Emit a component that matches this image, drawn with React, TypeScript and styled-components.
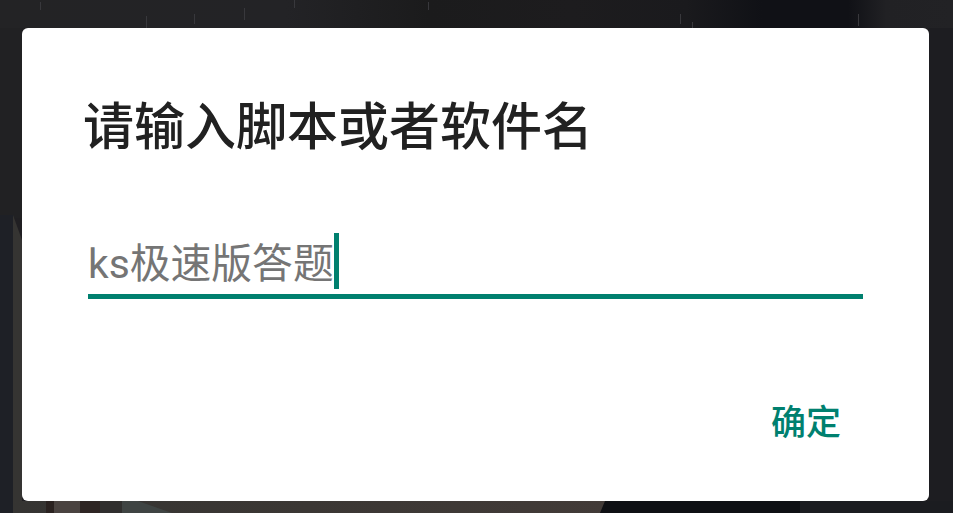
import styled, { createGlobalStyle } from "styled-components"

const GlobalStyle = createGlobalStyle`
	html, body {
		margin: 0;
		padding: 0;
		background: #1d1e22;
	}
`

const Backdrop = styled.div`
	position: relative;
	box-sizing: border-box;
	width: 953px;
	height: 513px;
	overflow: hidden;
	padding: 28px 24px 12px 22px;
	background: #201f22;
`

// the dimmed photo behind the dialog, only its edges stay visible
const Photo = styled.svg`
	position: absolute;
	inset: 0;
	width: 953px;
	height: 513px;
`

const Dialog = styled.div`
	position: relative;
	box-sizing: border-box;
	width: 907px;
	height: 473px;
	display: flex;
	flex-direction: column;
	background: #fff;
	border-radius: 6px;
	padding: 66px 66px 0 62px;
	font-family: "Roboto", "Noto Sans CJK SC", sans-serif;
`

const Title = styled.h1`
	margin: 0 0 0 -1px;
	font-size: 51px;
	line-height: 68px;
	font-weight: 500;
	color: #212121;
	white-space: nowrap;
`

const Field = styled.div`
	margin: 71px 0 0 4px;
	height: 61px;
	display: flex;
	align-items: flex-start;
	border-bottom: 5px solid #00806f;
`

const Value = styled.span`
	padding-top: 3px;
	font-size: 40.8px;
	line-height: 56px;
	color: #757575;
	white-space: nowrap;
`

const Caret = styled.span`
	width: 5px;
	height: 56px;
	background: #00806f;
`

const Actions = styled.div`
	display: flex;
	justify-content: flex-end;
	margin: 97px 22px 0 0;
`

const ConfirmButton = styled.div`
	font-size: 35px;
	line-height: 56px;
	font-weight: 500;
	color: #00806f;
	user-select: none;
`

const rain = [
	[40, 2, 8], [146, 16, 12], [194, 14, 10], [244, 8, 12], [294, 0, 8], [345, 30, 10],
	[428, 2, 8], [495, 30, 14], [680, 14, 10], [692, 22, 8], [792, 28, 14], [858, 14, 12],
]

export default function App() {
	return (
		<Backdrop>
			<GlobalStyle />
			<Photo viewBox="0 0 953 513">
				<defs>
					<linearGradient id="top" x1="0" x2="1" y1="0" y2="0">
						<stop offset="0" stopColor="#232325" />
						<stop offset="0.3" stopColor="#232326" />
						<stop offset="0.45" stopColor="#1b1b1c" />
						<stop offset="0.6" stopColor="#1d1c1e" />
						<stop offset="0.72" stopColor="#1a1a1d" />
						<stop offset="0.8" stopColor="#101116" />
						<stop offset="0.89" stopColor="#101116" />
						<stop offset="0.93" stopColor="#212124" />
						<stop offset="1" stopColor="#222225" />
					</linearGradient>
					<linearGradient id="bottom" x1="0" x2="1" y1="0" y2="0">
						<stop offset="0" stopColor="#353432" />
						<stop offset="0.5" stopColor="#3b3734" />
						<stop offset="1" stopColor="#423b38" />
					</linearGradient>
				</defs>
				<rect width="953" height="28" fill="url(#top)" />
				<rect x="0" y="28" width="22" height="190" fill="#212123" />
				<rect x="0" y="215" width="14" height="298" fill="#1e2026" />
				<polygon points="13,215 22,240 22,513 13,513" fill="#353432" />
				<rect x="929" y="28" width="24" height="485" fill="#1d1d21" />
				<rect x="14" y="501" width="591" height="12" fill="url(#bottom)" />
				<rect x="46" y="501" width="8" height="12" fill="#2a2220" />
				<rect x="54" y="501" width="26" height="12" fill="#4a4340" />
				<rect x="80" y="501" width="20" height="12" fill="#2e2523" />
				<rect x="100" y="501" width="22" height="12" fill="#302f2e" />
				<polygon points="122,501 138,501 172,513 122,513" fill="#3f4443" />
				<polygon points="605,501 800,501 800,513 600,513" fill="#0e1014" />
				<rect x="800" y="501" width="153" height="12" fill="#1b1c20" />
				{rain.map(([x, y, h]) => (
					<rect key={x} x={x} y={y} width="1" height={h} fill="#38383c" />
				))}
			</Photo>
			<Dialog>
				<Title>请输入脚本或者软件名</Title>
				<Field>
					<Value>ks极速版答题</Value>
					<Caret />
				</Field>
				<Actions>
					<ConfirmButton>确定</ConfirmButton>
				</Actions>
			</Dialog>
		</Backdrop>
	)
}
